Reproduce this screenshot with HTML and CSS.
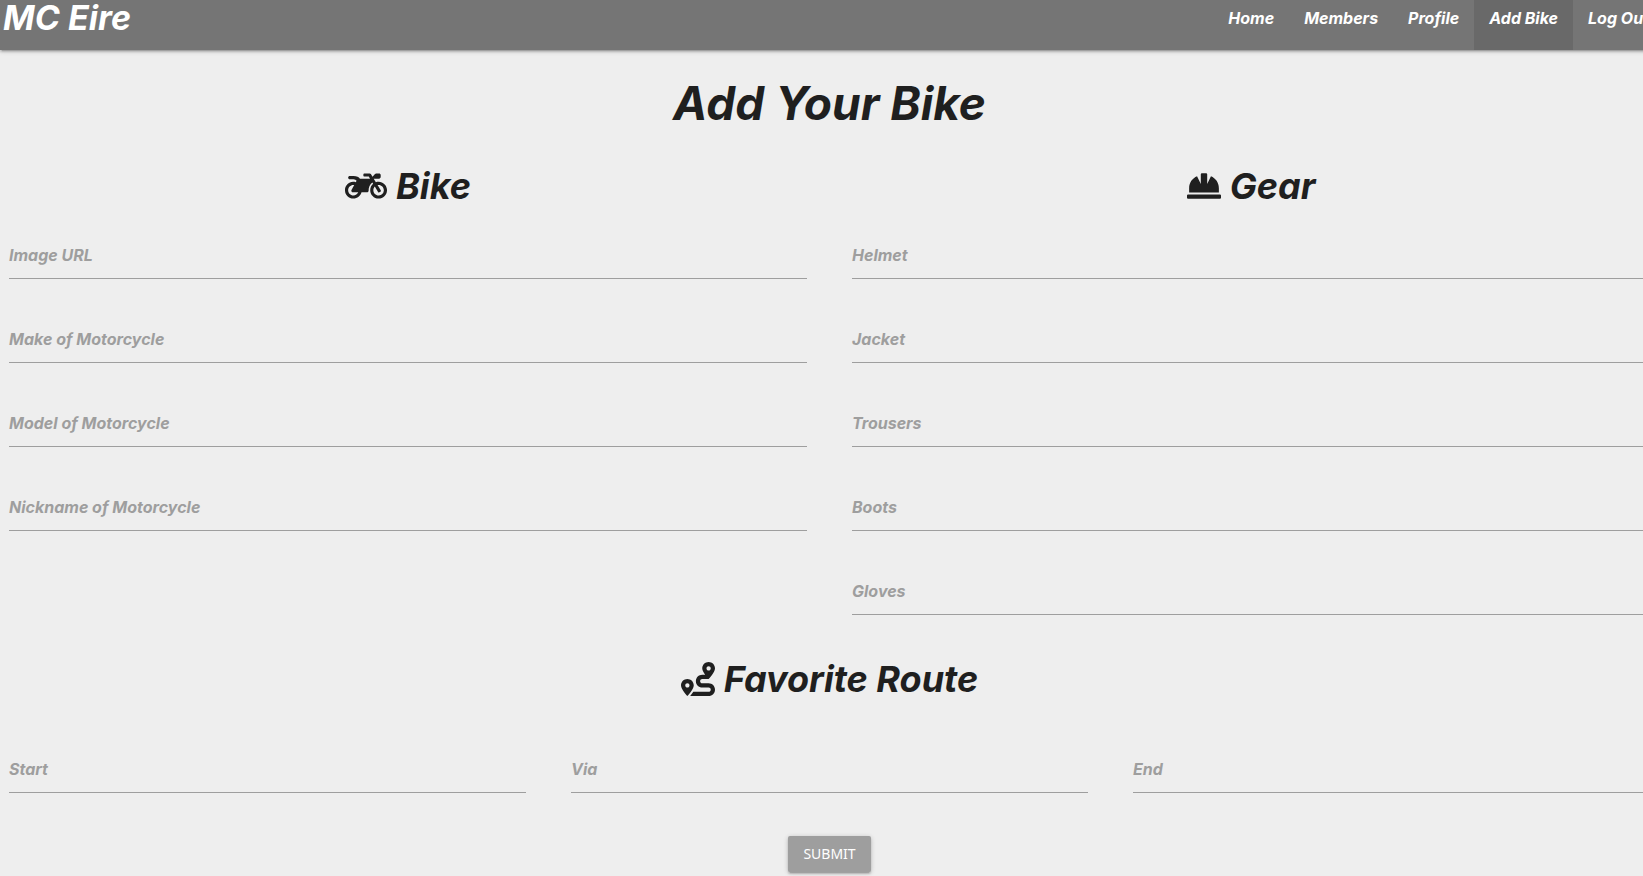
FILE: index.html
```html
<!DOCTYPE html>
<html lang="en">
<head>
<meta charset="utf-8">
<title>MC Eire - Add Your Bike</title>
<link rel="stylesheet" href="styles.css">
</head>
<body>
<header class="navbar">
  <a class="brand" href="#">MC Eire</a>
  <nav class="nav-links">
    <a href="#">Home</a>
    <a href="#">Members</a>
    <a href="#">Profile</a>
    <a class="active" href="#" aria-current="page">Add Bike</a>
    <a href="#">Log Out</a>
  </nav>
</header>
<main class="page">
  <h1 class="title">Add Your Bike</h1>
  <form class="bike-form">
    <div class="columns two">
      <section>
        <h2 class="heading">
          <svg class="icon wide" viewBox="0 0 640 512" aria-hidden="true"><path d="M512.9 192c-14.9-.1-29.1 2.3-42.4 6.9L437.6 144H520c13.3 0 24-10.7 24-24V88c0-13.3-10.7-24-24-24h-45.3c-6.8 0-13.3 2.9-17.8 7.9l-37.5 41.7-22.8-38C392.2 68.4 384.4 64 376 64h-80c-8.8 0-16 7.2-16 16v16c0 8.8 7.2 16 16 16h66.4l19.2 32H227.9c-17.7-23.1-44.9-40-99.9-40H72.5C59 104 47.7 115 48 128.5c.2 13 10.9 23.5 24 23.5h56c24.5 0 38.7 10.9 47.8 24.8l-11.3 20.5c-13-3.9-26.9-5.7-41.3-5.2C55.9 194.5 1.6 249.6 0 317c-1.6 72.1 56.3 131 128 131 59.6 0 109.7-40.8 124-96h84.2c13.7 0 24.6-11.4 24-25.1-2.1-47.1 17.5-93.7 56.2-125l12.5 20.8c-27.6 23.7-45.1 58.9-44.8 98.2.5 69.6 57.2 126.5 126.8 127.1 71.6.7 129.8-57.5 129.2-129.1-.7-69.6-57.6-126.4-127.2-126.9zM128 400c-44.1 0-80-35.9-80-80s35.9-80 80-80c4.2 0 8.4.3 12.5 1L99 316.4c-8.8 16 2.8 35.6 21 35.6h81.3c-12.4 28.2-40.6 48-73.3 48zm463.9-75.6c-2.2 40.6-35 73.4-75.5 75.5-46.1 2.5-84.4-34.3-84.4-79.9 0-21.4 8.4-40.8 22.1-55.1l49.4 82.4c4.5 7.6 14.4 10 22 5.5l13.7-8.2c7.6-4.5 10-14.4 5.5-22l-48.6-80.9c5.2-1.1 10.5-1.6 15.9-1.6 45.6-.1 82.3 38.2 79.9 84.3z"/></svg>
          Bike
        </h2>
        <div class="field"><input id="image" type="text"><label for="image">Image URL</label></div>
        <div class="field"><input id="make" type="text"><label for="make">Make of Motorcycle</label></div>
        <div class="field"><input id="model" type="text"><label for="model">Model of Motorcycle</label></div>
        <div class="field"><input id="nickname" type="text"><label for="nickname">Nickname of Motorcycle</label></div>
      </section>
      <section>
        <h2 class="heading">
          <svg class="icon" viewBox="0 0 512 512" aria-hidden="true"><path d="M480 288c0-80.25-49.28-148.92-119.19-177.62L304 224V80a16 16 0 0 0-16-16h-64a16 16 0 0 0-16 16v144l-56.81-113.62C81.28 139.08 32 207.75 32 288v64h448zm16 96H16a16 16 0 0 0-16 16v32a16 16 0 0 0 16 16h480a16 16 0 0 0 16-16v-32a16 16 0 0 0-16-16z"/></svg>
          Gear
        </h2>
        <div class="field"><input id="helmet" type="text"><label for="helmet">Helmet</label></div>
        <div class="field"><input id="jacket" type="text"><label for="jacket">Jacket</label></div>
        <div class="field"><input id="trousers" type="text"><label for="trousers">Trousers</label></div>
        <div class="field"><input id="boots" type="text"><label for="boots">Boots</label></div>
        <div class="field"><input id="gloves" type="text"><label for="gloves">Gloves</label></div>
      </section>
    </div>
    <section class="route">
      <h2 class="heading">
        <svg class="icon" viewBox="0 0 512 512" aria-hidden="true"><path d="M416 320h-96c-17.6 0-32-14.4-32-32s14.4-32 32-32h96s96-107 96-160-43-96-96-96-96 43-96 96c0 25.5 22.2 63.4 45.3 96H320c-52.9 0-96 43.1-96 96s43.1 96 96 96h96c17.6 0 32 14.4 32 32s-14.4 32-32 32H185.5c-16 24.8-33.8 47.7-47.3 64H416c52.9 0 96-43.1 96-96s-43.1-96-96-96zm0-256c17.7 0 32 14.3 32 32s-14.3 32-32 32-32-14.3-32-32 14.3-32 32-32zM96 256c-53 0-96 43-96 96s96 160 96 160 96-107 96-160-43-96-96-96zm0 128c-17.7 0-32-14.3-32-32s14.3-32 32-32 32 14.3 32 32-14.3 32-32 32z"/></svg>
        Favorite Route
      </h2>
      <div class="columns three">
        <div class="field"><input id="start" type="text"><label for="start">Start</label></div>
        <div class="field"><input id="via" type="text"><label for="via">Via</label></div>
        <div class="field"><input id="end" type="text"><label for="end">End</label></div>
      </div>
    </section>
    <button class="submit" type="submit">Submit</button>
  </form>
</main>
</body>
</html>
```
FILE: styles.css
```css
*, *::before, *::after { box-sizing: border-box; }

body {
  min-height: 100vh;
  margin: 0;
  overflow-x: hidden;
  background: #eeeeee;
  color: #1f1f1f;
  font: italic bold 16px/22px Inter, "Liberation Sans", sans-serif;
}

.navbar {
  display: flex;
  justify-content: space-between;
  height: 50px;
  margin-right: -21px;
  background: #757575;
  box-shadow: 0 2px 2px rgba(0, 0, 0, .14), 0 3px 1px -2px rgba(0, 0, 0, .12), 0 1px 5px rgba(0, 0, 0, .2);
}

.navbar a {
  color: #fff;
  line-height: 36px;
  text-decoration: none;
  white-space: nowrap;
}

.navbar .brand { padding-left: 3px; font-size: 34px; }

.nav-links { display: flex; }
.nav-links a { padding: 0 15px; }
.nav-links .active { background: #696969; }

/* The form grid runs slightly past the right edge of the window. */
.page { margin-right: -7px; padding: 29px 0 0 9px; }

.title {
  margin: 0;
  font-size: 46px;
  line-height: 48px;
  text-align: center;
}

.bike-form { display: flex; flex-direction: column; padding-top: 36px; }

.columns { display: grid; column-gap: 45px; }
.two { grid-template-columns: repeat(2, 1fr); }
.three { grid-template-columns: repeat(3, 1fr); }

.heading {
  display: flex;
  align-items: center;
  justify-content: center;
  gap: 9px;
  margin: 0 0 20px;
  font-size: 36px;
  line-height: 46px;
}

.icon { width: 34px; height: 34px; fill: currentColor; }
.icon.wide { width: 42px; }

.field { position: relative; height: 84px; }

.field input {
  display: block;
  width: 100%;
  height: 50px;
  padding: 0;
  border: 0;
  border-bottom: 1px solid #9e9e9e;
  background: transparent;
  color: inherit;
  font: inherit;
  outline: 0;
}

.field label {
  position: absolute;
  top: 15px;
  left: 0;
  color: #9e9e9e;
  cursor: text;
}

.route { padding-top: 7px; }
.route .heading { margin-bottom: 41px; }

.submit {
  align-self: center;
  height: 36px;
  padding: 0 15px;
  margin: 9px 0 4px;
  border: 0;
  border-radius: 2px;
  background: #9e9e9e;
  box-shadow: 0 2px 2px rgba(0, 0, 0, .14), 0 3px 1px -2px rgba(0, 0, 0, .12), 0 1px 5px rgba(0, 0, 0, .2);
  color: #fff;
  font: 14px/36px "Noto Sans", sans-serif;
  text-transform: uppercase;
}
```
